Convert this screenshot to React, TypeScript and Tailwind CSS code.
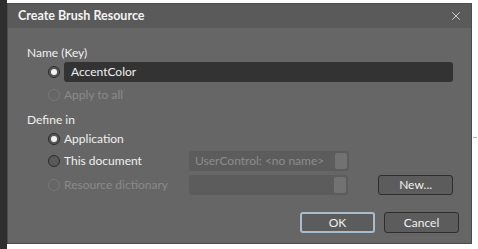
import { X } from "lucide-react";

const font = { fontFamily: 'Lato, "Noto Sans", sans-serif' };

const Radio = ({ checked, disabled }: { checked?: boolean; disabled?: boolean }) => (
  <span
    className={`flex h-[12px] w-[12px] shrink-0 items-center justify-center rounded-full border ${
      disabled ? "border-[#777]" : "border-[#2a2a2a] bg-[#5a5a5a]"
    }`}
  >
    {checked && <span className="h-[6px] w-[6px] rounded-full bg-[#f2f2f2]" />}
  </span>
);

const Combo = ({ text }: { text?: string }) => (
  <div className="flex h-[20px] w-[160px] items-center rounded-[3px] bg-[#5c5c5c] pl-[6px] pr-[2px]">
    <span className="flex-1 text-[12px] text-[#8c8c8c]">{text}</span>
    <span className="h-[16px] w-[12px] rounded-[2px] bg-[#727272]" />
  </div>
);

export default function App() {
  return (
    <div className="relative flex h-[249px] w-[478px] bg-white" style={font}>
      <div className="h-full w-[7px] bg-[#2e2e2e]" />
      <div className="mt-[3px] flex h-[241px] w-[465px] flex-col border border-[#4c4c4c] bg-[#666666]">
        <div className="flex h-[24px] items-center justify-between bg-[#5a5a5a] pl-[10px] pr-[8px]">
          <span className="text-[12.5px] font-bold text-[#f4f4f4]">Create Brush Resource</span>
          <X size={14} strokeWidth={1.5} className="text-[#e0e0e0]" />
        </div>
        <div className="flex flex-1 flex-col pl-[19px] pr-[18px] text-[12px] text-[#f0f0f0]">
          <div className="mt-[17px] leading-[16px]">Name (Key)</div>
          <div className="mt-[1px] flex items-center gap-[4px] pl-[21px]">
            <Radio checked />
            <div className="flex h-[20px] flex-1 items-center rounded-[3px] bg-[#333333] pl-[7px] text-[#f0f0f0]">
              AccentColor
            </div>
          </div>
          <div className="mt-[3px] flex h-[20px] items-center gap-[4px] pl-[21px] text-[#8a8a8a]">
            <Radio disabled />
            <span>Apply to all</span>
          </div>
          <div className="mt-[7px] leading-[16px]">Define in</div>
          <div className="mt-[2px] flex h-[18px] items-center gap-[4px] pl-[21px]">
            <Radio checked />
            <span>Application</span>
          </div>
          <div className="mt-[3px] flex h-[20px] items-center pl-[21px]">
            <Radio />
            <span className="ml-[4px] w-[125px]">This document</span>
            <Combo text="UserControl: <no name>" />
          </div>
          <div className="mt-[4px] flex h-[20px] items-center pl-[21px]">
            <Radio disabled />
            <span className="ml-[4px] w-[125px] text-[#8a8a8a]">Resource dictionary</span>
            <Combo />
            <button className="ml-[30px] h-[20px] w-[75px] rounded-[3px] border border-[#2e2e2e] bg-[#5c5c5c] text-[12px] text-[#f0f0f0]">
              New...
            </button>
          </div>
          <div className="-mr-[6px] mt-[17px] flex justify-end gap-[9px]">
            <button className="h-[21px] w-[75px] rounded-[3px] border-2 border-[#a9bccb] bg-[#5c5c5c] text-[12px] text-[#f0f0f0]">
              OK
            </button>
            <button className="h-[21px] w-[75px] rounded-[3px] border border-[#2e2e2e] bg-[#5c5c5c] text-[12px] text-[#f0f0f0]">
              Cancel
            </button>
          </div>
        </div>
      </div>
      <div className="absolute left-[473px] top-[137px] h-[1px] w-[4px] bg-[#9cb8e0]" />
    </div>
  );
}
